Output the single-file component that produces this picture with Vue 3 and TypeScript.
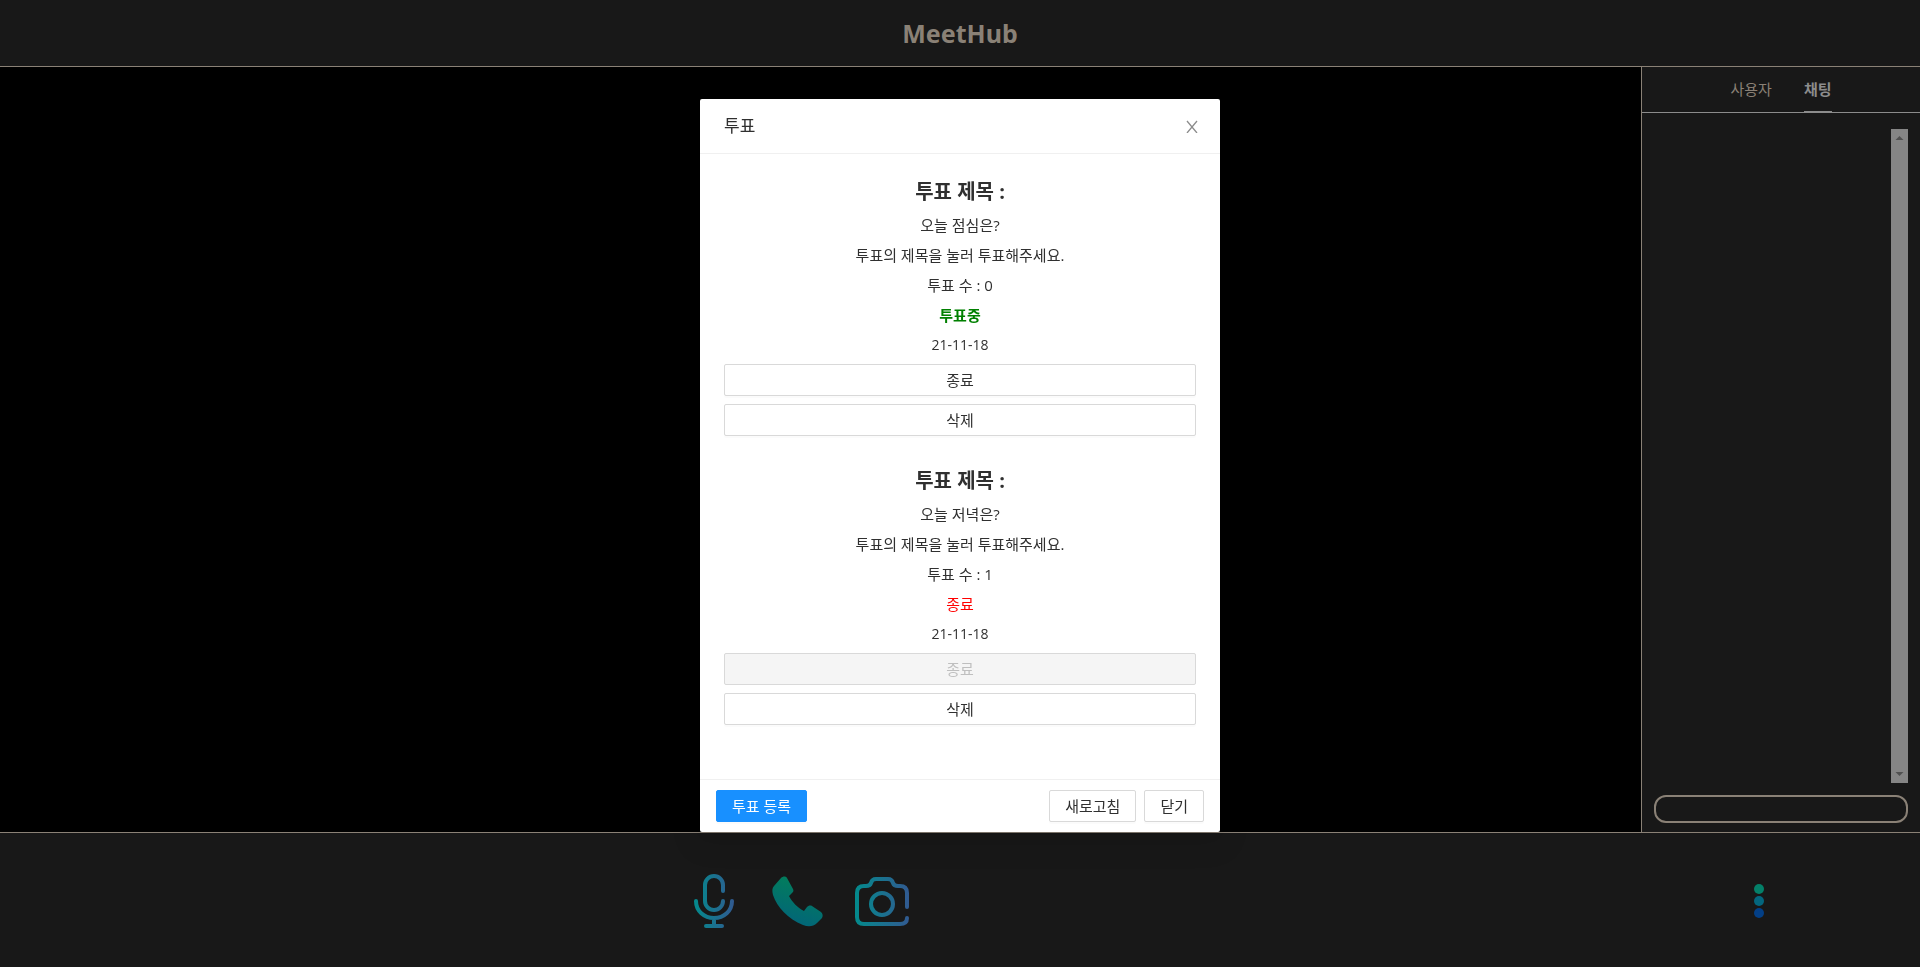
<script setup lang="ts">
import { ref } from 'vue'

interface Vote {
  id: number
  title: string
  count: number
  open: boolean
  date: string
}

const votes: Vote[] = [
  { id: 1, title: '오늘 점심은?', count: 0, open: true, date: '21-11-18' },
  { id: 2, title: '오늘 저녁은?', count: 1, open: false, date: '21-11-18' },
]

const message = ref('')
</script>

<template>
  <div class="page">
    <header class="top"><h1>MeetHub</h1></header>

    <main class="middle">
      <section class="stage"></section>
      <aside class="side">
        <nav class="tabs">
          <button type="button" class="tab">사용자</button>
          <button type="button" class="tab active">채팅</button>
        </nav>
        <div class="chat">
          <div class="log">
            <div class="bar">
              <svg width="17" height="17" viewBox="0 0 17 17"><path d="M4.5 11h8L8.5 7z" fill="#505050" /></svg>
              <svg width="17" height="17" viewBox="0 0 17 17"><path d="M4.5 6h8L8.5 10z" fill="#505050" /></svg>
            </div>
          </div>
          <input v-model="message" class="message" type="text" aria-label="채팅" />
        </div>
      </aside>
    </main>

    <footer class="controls">
      <div class="devices">
        <button type="button" class="icon" aria-label="마이크">
          <svg width="52" height="54" viewBox="-6 0 52 54" fill="none" stroke="url(#line)" stroke-width="4" stroke-linecap="round" stroke-linejoin="round">
            <defs>
              <linearGradient id="line" gradientUnits="userSpaceOnUse" x1="0" y1="0" x2="40" y2="0">
                <stop offset="0" stop-color="#038a8c" /><stop offset="1" stop-color="#315a91" />
              </linearGradient>
            </defs>
            <path d="M29 17V11A9 9 0 0 0 11 11V27A9 9 0 0 0 29 27M2 27C2 37 10 44 20 44S38 37 38 27M20 44V52M12 52H28" />
          </svg>
        </button>
        <button type="button" class="icon" aria-label="통화">
          <svg width="51" height="51" viewBox="0 0 51 51">
            <defs>
              <linearGradient id="phone" x1="0.7" y1="0" x2="0.4" y2="1">
                <stop offset="0" stop-color="#028058" /><stop offset="1" stop-color="#02647a" />
              </linearGradient>
            </defs>
            <path fill="url(#phone)" d="M9 2C11 0 14 0 15 2L21 13C22 15 21 16 20 17L17 20C20 26 26 32 32 35L35 31C36 30 38 29 40 30L49 36C51 38 51 40 50 42L45 47C41 51 36 51 31 49C16 43 5 31 1 19C0 15 0 12 2 10Z" />
          </svg>
        </button>
        <button type="button" class="icon" aria-label="카메라">
          <svg width="54" height="49" viewBox="0 0 54 49" fill="none" stroke="url(#cam)" stroke-width="4" stroke-linecap="round" stroke-linejoin="round">
            <defs>
              <linearGradient id="cam" gradientUnits="userSpaceOnUse" x1="0" y1="0" x2="54" y2="0">
                <stop offset="0" stop-color="#038a8c" /><stop offset="1" stop-color="#315a91" />
              </linearGradient>
            </defs>
            <path d="M52 30V16Q52 9 45 9H43Q39 9 38 6Q37 2 33 2H21Q17 2 16 6Q15 9 11 9H9Q2 9 2 16V40Q2 47 9 47H45Q52 47 52 41" />
            <circle cx="27" cy="27" r="11" />
          </svg>
        </button>
      </div>
      <div class="more">
        <button type="button" class="icon" aria-label="더보기">
          <svg width="10" height="34" viewBox="0 0 10 34">
            <circle cx="5" cy="5" r="5" fill="#048069" />
            <circle cx="5" cy="17" r="5" fill="#04667e" />
            <circle cx="5" cy="29" r="5" fill="#033f86" />
          </svg>
        </button>
      </div>
    </footer>

    <div class="overlay">
      <section class="modal" role="dialog" aria-labelledby="modal-title">
        <header class="modal-head">
          <h2 id="modal-title">투표</h2>
          <button type="button" class="close" aria-label="닫기">
            <svg width="12" height="14" viewBox="0 0 12 14" stroke="#8c8c8c" stroke-width="1.3"><path d="M1 2L11 14M11 2L1 14" /></svg>
          </button>
        </header>
        <div class="modal-body">
          <article v-for="vote in votes" :key="vote.id" class="vote">
            <h3>투표 제목 :</h3>
            <p>{{ vote.title }}</p>
            <p>투표의 제목을 눌러 투표해주세요.</p>
            <p>투표 수 : {{ vote.count }}</p>
            <p :class="vote.open ? 'open' : 'ended'">{{ vote.open ? '투표중' : '종료' }}</p>
            <p class="date">{{ vote.date }}</p>
            <button type="button" class="btn" :disabled="!vote.open">종료</button>
            <button type="button" class="btn">삭제</button>
          </article>
        </div>
        <footer class="modal-foot">
          <button type="button" class="btn primary">투표 등록</button>
          <button type="button" class="btn">새로고침</button>
          <button type="button" class="btn">닫기</button>
        </footer>
      </section>
    </div>
  </div>
</template>

<style>
body {
  margin: 0;
  background: #181818;
}
</style>

<style scoped>
.page {
  display: flex;
  flex-direction: column;
  height: 100vh;
  background: #181818;
  color: #303030;
  font-family: "Open Sans", "Noto Sans CJK KR", sans-serif;
  font-size: 15px;
  line-height: 22px;
}
.page *,
.page {
  box-sizing: border-box;
}
h1,
h2,
h3,
p {
  margin: 0;
}
button,
input {
  font: inherit;
  color: inherit;
}
svg {
  display: block;
}
.top {
  display: flex;
  align-items: center;
  justify-content: center;
  height: 67px;
  border-bottom: 1px solid #8a8176;
}
h1 {
  color: #8a8176;
  font-family: "Noto Sans", sans-serif;
  font-size: 25px;
  line-height: 32px;
  font-weight: 700;
}
.middle {
  display: flex;
  flex: 1;
  min-height: 0;
}
.stage {
  flex: 1;
  background: #000;
}
.side {
  display: flex;
  flex-direction: column;
  width: 279px;
  border-left: 1px solid #8a8176;
}
.tabs {
  display: flex;
  justify-content: center;
  gap: 32px;
  height: 46px;
  border-bottom: 1px solid #8c8c8c;
}
.tab {
  height: 46px;
  padding: 0;
  border: 0;
  border-bottom: 2px solid transparent;
  background: none;
  color: #8a8176;
}
.tab.active {
  border-color: #8c8c8c;
  color: #8c8c8c;
  font-weight: 700;
}
.chat {
  display: flex;
  flex: 1;
  flex-direction: column;
  gap: 12px;
  padding: 16px 12px 9px;
}
.log {
  display: flex;
  flex: 1;
  justify-content: flex-end;
}
.bar {
  display: flex;
  flex-direction: column;
  justify-content: space-between;
  width: 17px;
  background: #858585;
}
.message {
  width: 100%;
  height: 28px;
  padding: 0 12px;
  border: 2px solid #8a8176;
  border-radius: 12px;
  background: transparent;
  color: #8c8c8c;
}
.controls {
  display: flex;
  align-items: center;
  height: 135px;
  padding-top: 2px;
  border-top: 1px solid #8a8176;
}
.devices {
  display: flex;
  flex: 1;
  align-items: center;
  justify-content: center;
  gap: 32px;
}
.more {
  display: flex;
  width: 323px;
  justify-content: center;
}
.icon {
  padding: 0;
  border: 0;
  background: none;
}
.overlay {
  position: fixed;
  inset: 0;
  display: flex;
  align-items: flex-start;
  justify-content: center;
  padding-top: 99px;
}
.modal {
  width: 520px;
  border-radius: 2px;
  background: #fff;
  box-shadow: 0 6px 16px rgba(0, 0, 0, 0.08), 0 9px 28px 8px rgba(0, 0, 0, 0.05);
}
.modal-head {
  display: flex;
  align-items: center;
  justify-content: space-between;
  padding: 16px 22px 16px 24px;
  border-bottom: 1px solid #f0f0f0;
}
h2 {
  font-size: 17px;
  line-height: 22px;
  font-weight: 400;
}
.close {
  padding: 0;
  border: 0;
  background: none;
}
.modal-body {
  display: flex;
  flex-direction: column;
  gap: 31px;
  padding: 24px 24px 54px;
}
.vote {
  display: flex;
  flex-direction: column;
  gap: 8px;
  text-align: center;
}
h3 {
  font-size: 20px;
  line-height: 28px;
  font-weight: 700;
}
.date {
  font-size: 14px;
}
.open {
  color: #008000;
  font-weight: 700;
}
.ended {
  color: #f00;
}
.btn {
  height: 32px;
  padding: 0 15px;
  border: 1px solid #d9d9d9;
  border-radius: 2px;
  background: #fff;
  box-shadow: 0 2px 0 rgba(0, 0, 0, 0.016);
}
.btn:disabled {
  background: #f5f5f5;
  color: #bfbfbf;
  box-shadow: none;
}
.btn.primary {
  margin-right: auto;
  border-color: #1890ff;
  background: #1890ff;
  color: #fff;
}
.modal-foot {
  display: flex;
  gap: 8px;
  padding: 10px 16px;
  border-top: 1px solid #f0f0f0;
}
</style>
